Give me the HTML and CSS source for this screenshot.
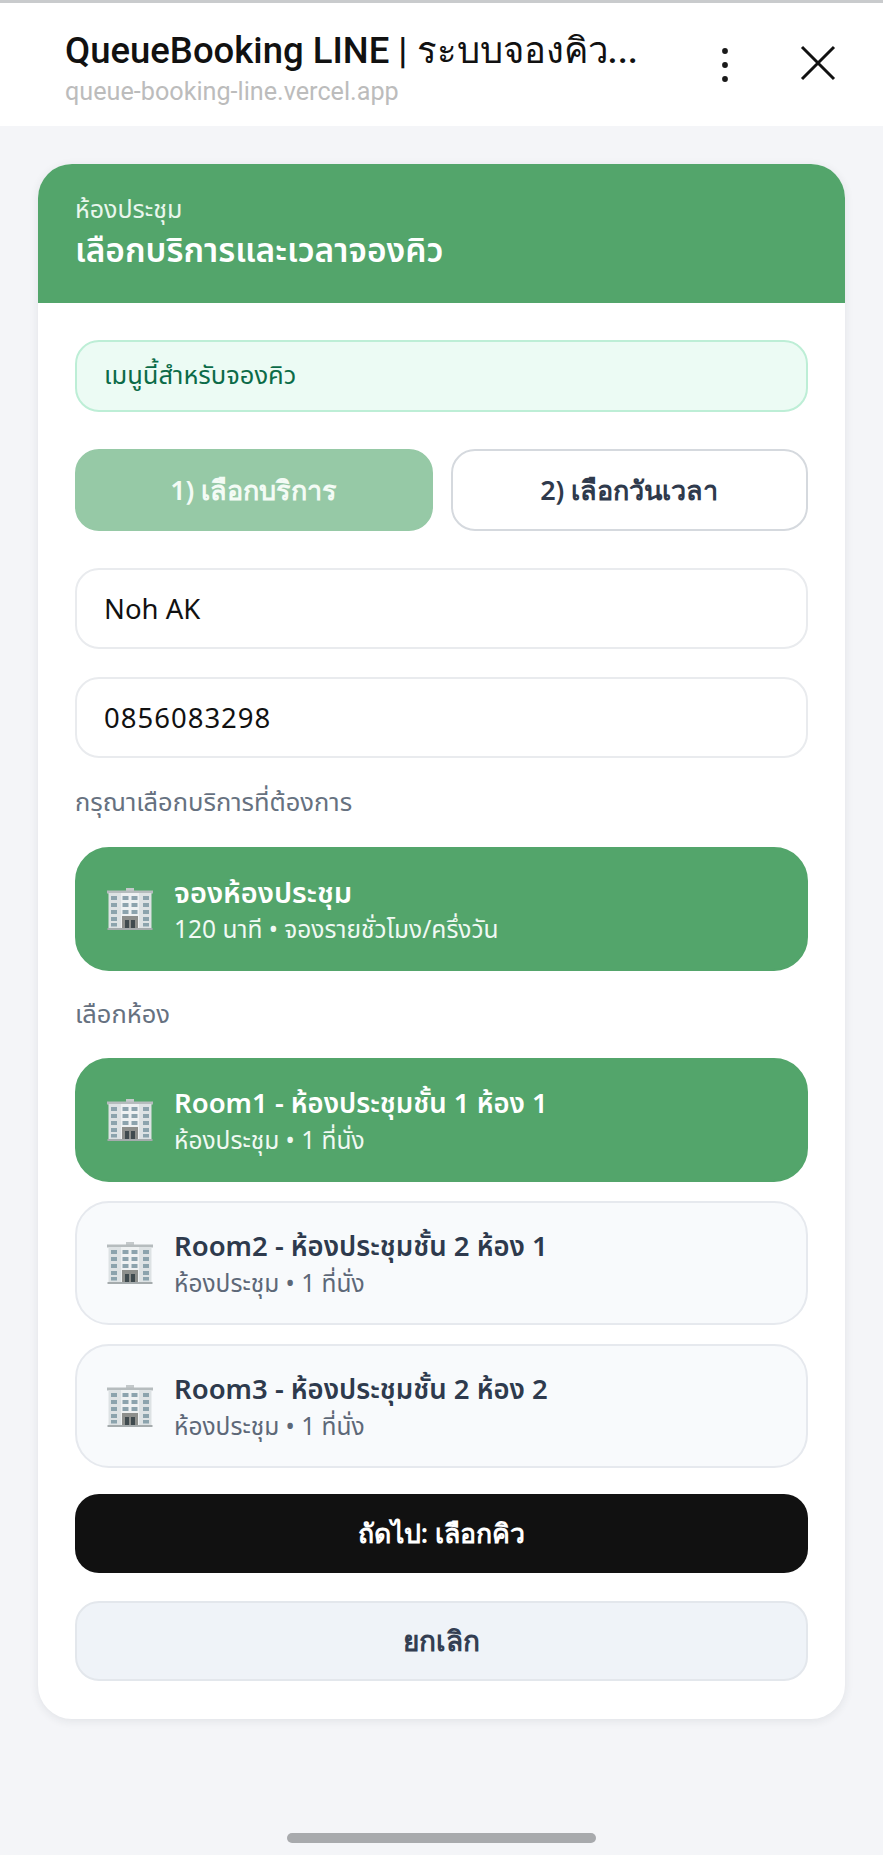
FILE: index.html
```html
<!DOCTYPE html>
<html lang="th">
<head>
<meta charset="utf-8">
<title>QueueBooking LINE</title>
<link rel="stylesheet" href="styles.css">
</head>
<body>
<svg class="defs" width="0" height="0" aria-hidden="true">
  <symbol id="building" viewBox="0 0 46 42">
    <rect x="19" y="0" width="8" height="3" fill="#c4c9cb"/>
    <rect x="0" y="2.5" width="46" height="3" fill="#b6bcbe"/>
    <rect x="1.5" y="5" width="43" height="36" fill="#dde2e4"/>
    <rect x="14" y="5" width="18" height="36" fill="#eef1f2"/>
    <g fill="#8ca3ad">
      <rect x="4" y="8" width="6" height="4"/><rect x="15.500" y="8" width="6" height="4"/><rect x="24.500" y="8" width="6" height="4"/><rect x="36" y="8" width="6" height="4"/>
      <rect x="4" y="15" width="6" height="4"/><rect x="15.500" y="15" width="6" height="4"/><rect x="24.500" y="15" width="6" height="4"/><rect x="36" y="15" width="6" height="4"/>
      <rect x="4" y="22" width="6" height="4"/><rect x="15.500" y="22" width="6" height="4"/><rect x="24.500" y="22" width="6" height="4"/><rect x="36" y="22" width="6" height="4"/>
      <rect x="4" y="29" width="6" height="4"/><rect x="36" y="29" width="6" height="4"/>
      <rect x="4" y="35" width="6" height="3.500"/><rect x="36" y="35" width="6" height="3.500"/>
    </g>
    <rect x="15" y="28" width="16" height="13" fill="#8d8f8c"/>
    <rect x="18" y="32" width="4" height="9" fill="#3f4a4e"/>
    <rect x="24" y="32" width="4" height="9" fill="#3f4a4e"/>
    <rect x="0.500" y="40" width="45" height="2" fill="#a5abad"/>
  </symbol>
</svg>
<header class="topbar">
  <div class="topbar-text">
    <div class="topbar-title">QueueBooking LINE | ระบบจองคิว...</div>
    <div class="topbar-url">queue-booking-line.vercel.app</div>
  </div>
  <svg class="icon-more" width="8" height="36" viewBox="0 0 8 36"><circle cx="4" cy="4" r="2.900"/><circle cx="4" cy="18" r="2.900"/><circle cx="4" cy="32" r="2.900"/></svg>
  <svg class="icon-close" width="36" height="36" viewBox="0 0 36 36"><path d="M2 2 L34 34 M34 2 L2 34"/></svg>
</header>
<main class="page">
  <section class="card">
    <div class="card-head">
      <div class="card-kicker">ห้องประชุม</div>
      <h1 class="card-title">เลือกบริการและเวลาจองคิว</h1>
    </div>
    <div class="card-body">
      <div class="notice">เมนูนี้สำหรับจองคิว</div>
      <div class="tabs">
        <button class="tab tab-active">1) เลือกบริการ</button>
        <button class="tab">2) เลือกวันเวลา</button>
      </div>
      <input class="field field-name" value="Noh AK">
      <input class="field field-phone" value="0856083298">
      <div class="label label-service">กรุณาเลือกบริการที่ต้องการ</div>
      <div class="option option-on">
        <svg class="option-icon"><use href="#building"/></svg>
        <div><div class="option-name option-name-lg">จองห้องประชุม</div><div class="option-sub">120 นาที • จองรายชั่วโมง/ครึ่งวัน</div></div>
      </div>
      <div class="label label-room">เลือกห้อง</div>
      <div class="option option-on option-first">
        <svg class="option-icon"><use href="#building"/></svg>
        <div><div class="option-name">Room1 - ห้องประชุมชั้น 1 ห้อง 1</div><div class="option-sub">ห้องประชุม • 1 ที่นั่ง</div></div>
      </div>
      <div class="option option-next">
        <svg class="option-icon"><use href="#building"/></svg>
        <div><div class="option-name">Room2 - ห้องประชุมชั้น 2 ห้อง 1</div><div class="option-sub">ห้องประชุม • 1 ที่นั่ง</div></div>
      </div>
      <div class="option option-next">
        <svg class="option-icon"><use href="#building"/></svg>
        <div><div class="option-name">Room3 - ห้องประชุมชั้น 2 ห้อง 2</div><div class="option-sub">ห้องประชุม • 1 ที่นั่ง</div></div>
      </div>
      <button class="btn btn-primary">ถัดไป: เลือกคิว</button>
      <button class="btn btn-cancel">ยกเลิก</button>
    </div>
  </section>
  <div class="home-bar"></div>
</main>
</body>
</html>
```
FILE: styles.css
```css
* { box-sizing: border-box; }
html, body { margin: 0; padding: 0; }
body {
  width: 883px;
  height: 1855px;
  overflow: hidden;
  background: #f4f5f8;
  font-family: "Noto Sans", "Noto Sans Thai", "Inter", "Liberation Sans", sans-serif;
  display: flex;
  flex-direction: column;
}
.defs { position: absolute; }
.topbar {
  height: 126px;
  flex: none;
  background: #fff;
  border-top: 3px solid #c9cbcd;
  display: flex;
  align-items: flex-start;
  padding: 27px 47px 0 65px;
}
.topbar-text { flex: 1; min-width: 0; }
.topbar-title {
  font-family: Roboto, "Noto Sans", sans-serif;
  font-size: 36.500px;
  font-weight: 500;
  line-height: 42px;
  color: #111;
  white-space: nowrap;
}
.topbar-url {
  font-family: Roboto, sans-serif;
  font-size: 25.200px;
  line-height: 28px;
  margin-top: 6px;
  color: #bcbcbc;
}
.icon-more { fill: #1a1a1a; margin-top: 17px; margin-right: 71px; }
.icon-close { fill: none; stroke: #111; stroke-width: 3; margin-top: 15px; }
.page { flex: 1; padding: 38px 38px 0; display: flex; flex-direction: column; align-items: stretch; }
.card {
  height: 1555px;
  background: #fff;
  border-radius: 34px;
  box-shadow: 0 2px 10px rgba(30, 40, 60, .09);
  overflow: hidden;
}
.card-head {
  height: 139px;
  background: #53a56b;
  padding: 29px 37px 0;
  color: #fff;
}
.card-kicker { font-size: 25px; line-height: 30px; color: #e9f6ed; }
.card-title { margin: 6px 0 0; font-size: 33.500px; line-height: 40px; font-weight: 600; }
.card-body { padding: 37px 37px 0; display: flex; flex-direction: column; }
.notice {
  height: 72px;
  display: flex;
  align-items: center;
  padding: 0 27px;
  background: #ecfbf4;
  border: 2px solid #bdeed6;
  border-radius: 24px;
  font-size: 25.500px;
  color: #0b6b48;
}
.tabs { display: grid; grid-template-columns: 1fr 1fr; gap: 18px; margin-top: 37px; }
.tab {
  height: 82px;
  background: #fff;
  border: 2px solid #d5d9de;
  border-radius: 24px;
  font: 600 27px "Noto Sans", sans-serif;
  color: #2f3a4c;
}
.tab-active { background: #96c9a6; border-color: #96c9a6; color: #f3fbf5; }
.field {
  display: block;
  width: 100%;
  height: 81px;
  padding: 0 27px;
  background: #fff;
  border: 2px solid #e9ebee;
  border-radius: 24px;
  font: 400 27.500px "Noto Sans", sans-serif;
  color: #111;
  outline: none;
}
.field-name { margin-top: 37px; }
.field-phone { margin-top: 28px; letter-spacing: 1px; }
.label { font-size: 25.500px; line-height: 30px; color: #667180; }
.label-service { margin-top: 28px; margin-bottom: 31px; }
.label-room { margin-top: 27px; margin-bottom: 30px; }
.option {
  height: 124px;
  display: flex;
  align-items: center;
  gap: 21px;
  padding: 0 30px 0 30px;
  border: 2px solid #e6e9ee;
  border-radius: 34px;
  background: #f8fafc;
  color: #2e3a4d;
}
.option-next { margin-top: 19px; }
.option-on { background: #53a56b; border-color: #53a56b; color: #fff; }
.option-icon { width: 46px; height: 42px; flex: none; }
.option-name { font-size: 27.500px; line-height: 34px; font-weight: 600; }
.option-name-lg { font-size: 29px; }
.option-sub { font-size: 24.500px; line-height: 30px; margin-top: 5px; color: #5d6878; }
.option-on .option-sub { color: #f0f9f3; }
.btn {
  display: block;
  width: 100%;
  border-radius: 24px;
  font: 600 26.700px "Noto Sans", sans-serif;
}
.btn-primary { height: 79px; margin-top: 26px; background: #111; border: 0; color: #fff; }
.btn-cancel { height: 80px; margin-top: 28px; background: #eff3f8; border: 2px solid #e3e7ec; color: #333e52; font-size: 28px; }
.home-bar {
  width: 309px;
  height: 10px;
  margin: 114px auto 0;
  background: #a8aaad;
  border-radius: 5px;
}
```
